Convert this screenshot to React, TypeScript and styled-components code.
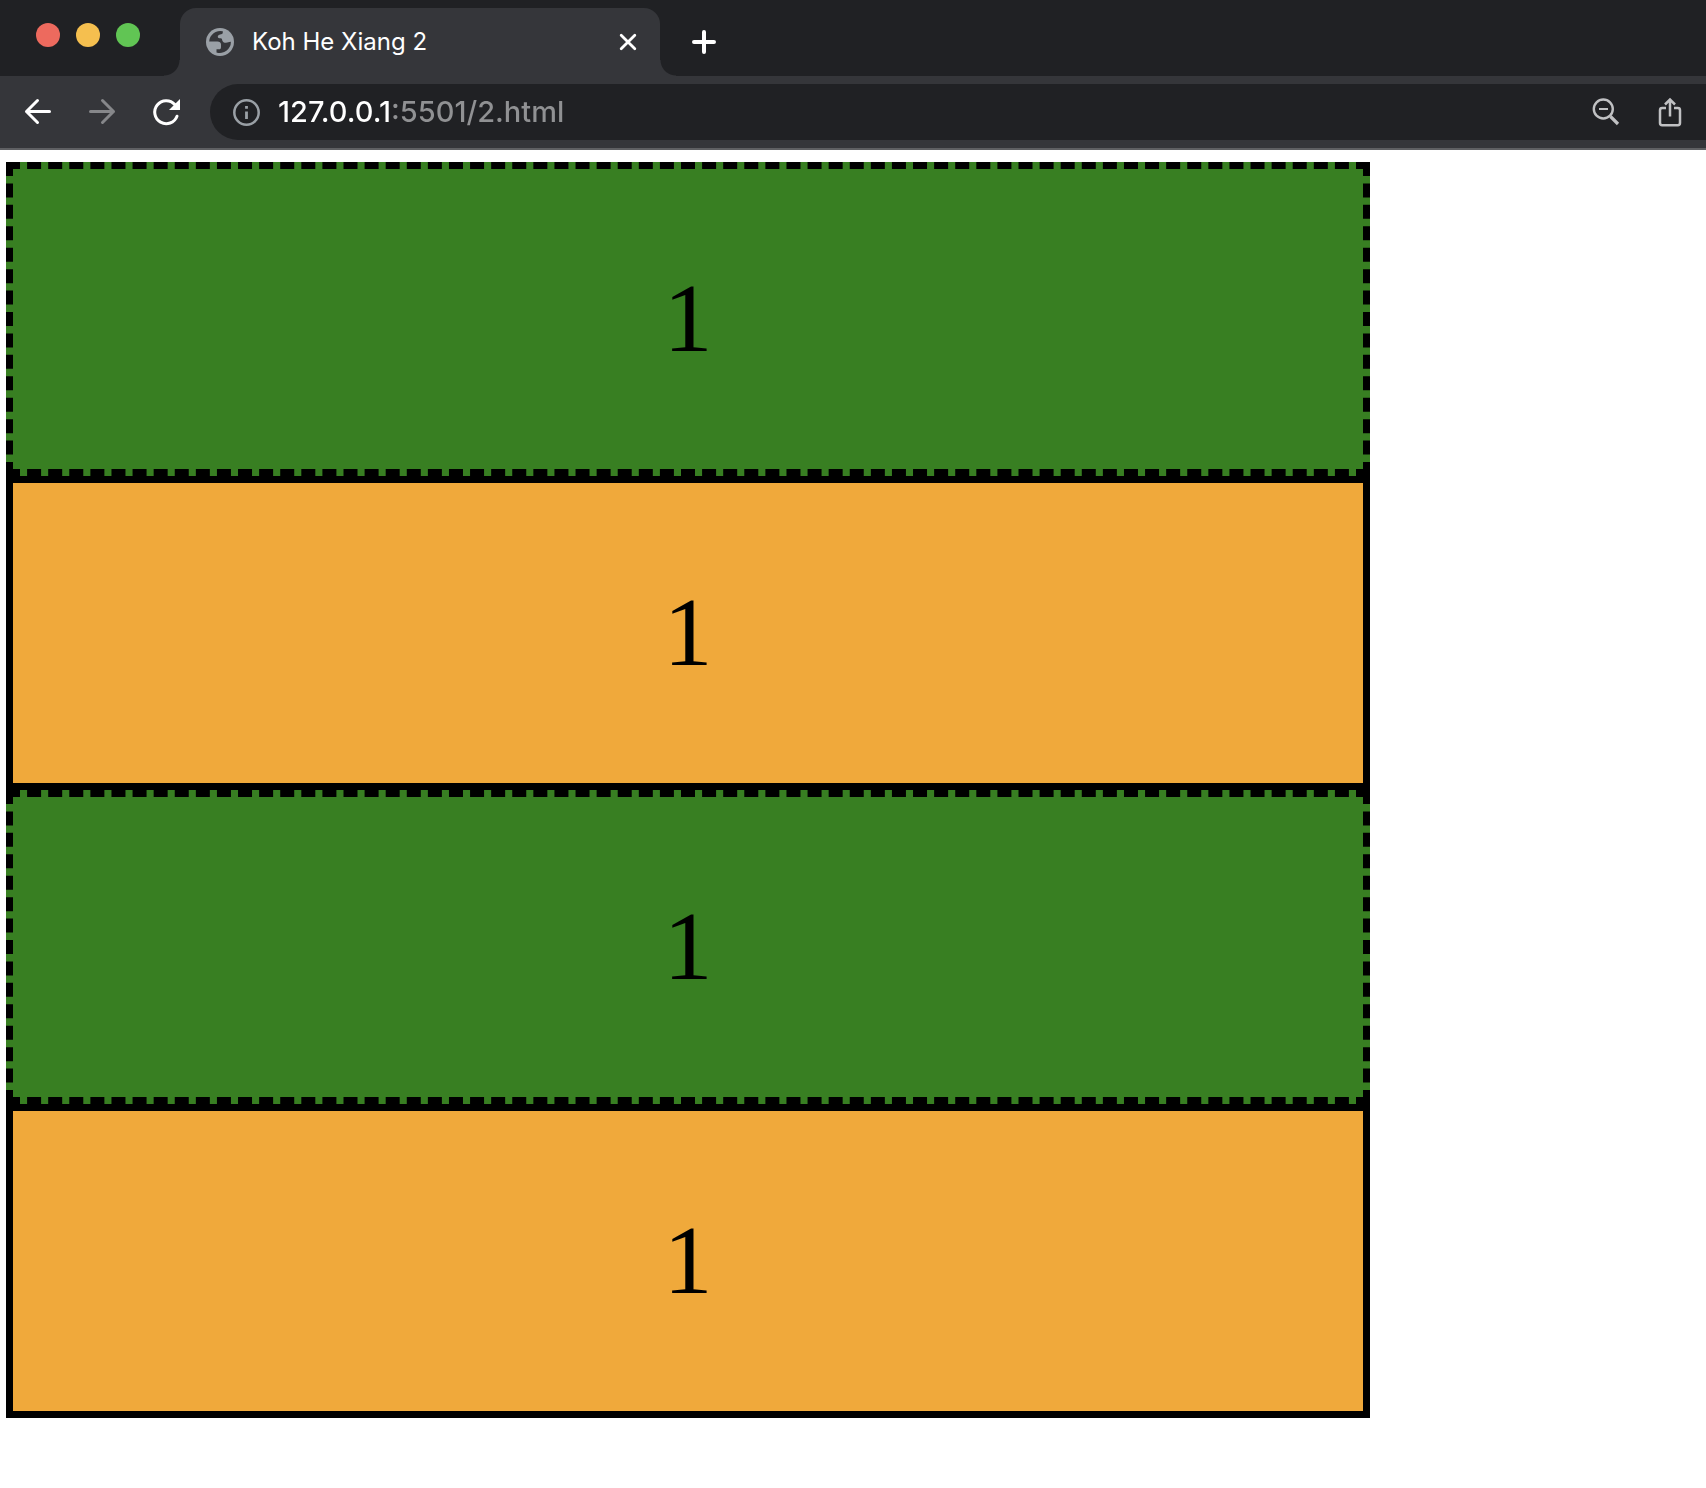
import React from "react";
import styled, { createGlobalStyle } from "styled-components";

const GlobalStyle = createGlobalStyle`
  *, *::before, *::after { box-sizing: border-box; }
  body { margin: 0; background: #fff; overflow-x: hidden; }
`;

const Browser = styled.div`
  display: flex;
  flex-direction: column;
  font-family: Inter, "Liberation Sans", sans-serif;
`;

const TabStrip = styled.header`
  display: flex;
  align-items: stretch;
  height: 76px;
  padding-top: 8px;
  background: #202124;
`;

const WindowControls = styled.div`
  display: flex;
  gap: 16px;
  width: 180px;
  padding: 15px 0 0 36px;
`;

const WindowButton = styled.button<{ $color: string }>`
  width: 24px;
  height: 24px;
  padding: 0;
  border: 0;
  border-radius: 50%;
  background: ${(p) => p.$color};
`;

const Tab = styled.div`
  position: relative;
  display: flex;
  align-items: center;
  gap: 18px;
  width: 480px;
  padding: 0 20px 0 26px;
  border-radius: 16px 16px 0 0;
  background: #35363a;
  color: #fff;

  &::before,
  &::after {
    content: "";
    position: absolute;
    bottom: 0;
    width: 16px;
    height: 16px;
  }
  &::before {
    right: 100%;
    background: radial-gradient(circle at 0 0, transparent 15px, #35363a 16px);
  }
  &::after {
    left: 100%;
    background: radial-gradient(circle at 100% 0, transparent 15px, #35363a 16px);
  }
`;

const TabTitle = styled.span`
  flex: 1;
  font-size: 24px;
  line-height: 32px;
  white-space: nowrap;
`;

const IconButton = styled.button<{ $color?: string }>`
  display: flex;
  align-items: center;
  justify-content: center;
  flex: none;
  width: 24px;
  height: 32px;
  padding: 0;
  border: 0;
  background: none;
  color: ${(p) => p.$color ?? "#fff"};
`;

const NewTab = styled(IconButton)`
  margin: 18px 0 0 32px;
`;

const Toolbar = styled.nav`
  display: flex;
  align-items: center;
  height: 74px;
  padding: 0 0 0 22px;
  border-bottom: 2px solid #5f6063;
  background: #35363a;
`;

const NavButtons = styled.div`
  display: flex;
  gap: 32px;
  width: 188px;
`;

const NavButton = styled(IconButton)`
  width: 32px;
`;

const AddressBar = styled.form`
  display: flex;
  align-items: center;
  flex: 1;
  height: 56px;
  padding: 0 20px;
  border-radius: 28px 0 0 28px;
  background: #202124;
`;

const AddressInput = styled.input`
  flex: 1;
  min-width: 0;
  height: 40px;
  margin-left: 16px;
  padding: 0;
  border: 0;
  outline: 0;
  background: linear-gradient(90deg, #fff 114px, #909193 114px);
  -webkit-background-clip: text;
  background-clip: text;
  -webkit-text-fill-color: transparent;
  font: 500 29px/40px Inter, "Liberation Sans", sans-serif;
`;

const AddressActions = styled.div`
  display: flex;
  gap: 32px;
`;

const Page = styled.main`
  padding: 12px 0 0 6px;
`;

const Box = styled.div<{ $variant: "green" | "orange" }>`
  display: flex;
  align-items: center;
  justify-content: center;
  width: calc(80vw - 1px);
  height: 314px;
  padding-bottom: 2px;
  border: 7px ${(p) => (p.$variant === "green" ? "dashed" : "solid")} #000;
  background: ${(p) => (p.$variant === "green" ? "#387f22" : "#f0a93b")};
  color: #000;
  font-family: "Liberation Serif", serif;
  font-size: 98px;
`;

const boxes: Array<"green" | "orange"> = ["green", "orange", "green", "orange"];

export default function App() {
  return (
    <Browser>
      <GlobalStyle />
      <TabStrip>
        <WindowControls>
          <WindowButton $color="#ed6a5e" aria-label="Close window" />
          <WindowButton $color="#f5bf4f" aria-label="Minimize window" />
          <WindowButton $color="#61c554" aria-label="Zoom window" />
        </WindowControls>
        <Tab>
          <svg width="28" height="28" viewBox="0 0 28 28" aria-hidden="true">
            <circle cx="14" cy="14" r="14" fill="#9aa0a6" />
            <path
              fill="#35363a"
              d="M3.200 13.500A11 11 0 0 1 16.800 3.300V4.500C16.800 6 15.500 6.200 14 6.500C12.300 6.900 11.800 7.800 11.800 8.800C11.800 10.200 13 10.200 14.500 10.200C16 10.200 16 11 16.200 12.200C16.500 13.800 18 14.800 20 14.800C22 14.800 22.500 13.800 24.900 13.800A11 11 0 0 1 10.500 24.400V21.300H13C14.500 21.300 15 20.500 15 19V16.500C15 14.500 13.500 13.700 11.500 13.500Z"
            />
          </svg>
          <TabTitle>Koh He Xiang 2</TabTitle>
          <IconButton aria-label="Close tab">
            <svg width="20" height="20" viewBox="0 0 20 20" fill="none" stroke="currentColor" strokeWidth="2.8" strokeLinecap="round">
              <path d="M3.200 3.200 16.800 16.800M16.800 3.200 3.200 16.800" />
            </svg>
          </IconButton>
        </Tab>
        <NewTab aria-label="New tab">
          <svg width="24" height="24" viewBox="0 0 24 24" fill="none" stroke="currentColor" strokeWidth="4" strokeLinecap="round">
            <path d="M12 2V22M2 12H22" />
          </svg>
        </NewTab>
      </TabStrip>
      <Toolbar>
        <NavButtons>
          <NavButton aria-label="Back">
            <svg width="32" height="32" viewBox="0 0 32 32" fill="none" stroke="currentColor" strokeWidth="3" strokeLinecap="round" strokeLinejoin="round">
              <path d="M27.500 15.500H4.500M15.500 4.500 4.500 15.500 15.500 26.500" />
            </svg>
          </NavButton>
          <NavButton aria-label="Forward" $color="#86878a">
            <svg width="32" height="32" viewBox="0 0 32 32" fill="none" stroke="currentColor" strokeWidth="3" strokeLinecap="round" strokeLinejoin="round">
              <path d="M4.500 15.500H27.500M16.500 4.500 27.500 15.500 16.500 26.500" />
            </svg>
          </NavButton>
          <NavButton aria-label="Reload">
            <svg width="32" height="32" viewBox="0 0 32 32" fill="none">
              <path d="M27 20.200A11.500 11.500 0 1 1 24.800 8.500" stroke="currentColor" strokeWidth="3" strokeLinecap="round" />
              <path d="M30 3V14H19Z" fill="currentColor" />
            </svg>
          </NavButton>
        </NavButtons>
        <AddressBar onSubmit={(e) => e.preventDefault()}>
          <NavButton type="button" aria-label="Site information" $color="#9aa0a6">
            <svg width="28" height="28" viewBox="0 0 28 28" fill="none" stroke="currentColor">
              <circle cx="14.500" cy="14.500" r="12.200" strokeWidth="2.500" />
              <path d="M14.500 13.500V21M14.500 8V10.800" strokeWidth="2.800" />
            </svg>
          </NavButton>
          <AddressInput aria-label="Address" defaultValue="127.0.0.1:5501/2.html" spellCheck={false} />
          <AddressActions>
            <NavButton type="button" aria-label="Zoom out" $color="#c0c1c3">
              <svg width="32" height="32" viewBox="0 0 32 32" fill="none" stroke="currentColor">
                <circle cx="13.300" cy="13" r="9.500" strokeWidth="2.400" />
                <path d="M9 13H18" strokeWidth="2" />
                <path d="M20.500 20.500 28 28" strokeWidth="3.200" />
              </svg>
            </NavButton>
            <NavButton type="button" aria-label="Share" $color="#c0c1c3">
              <svg width="32" height="32" viewBox="0 0 32 32" fill="none" stroke="currentColor" strokeWidth="2.500">
                <path d="M12 12H8.200Q6 12 6 14.200V27Q6 29.200 8.200 29.200H23.800Q26 29.200 26 27V14.200Q26 12 23.800 12H20" />
                <path d="M16 20.500V3.500M11 8.500 16 3.500 21 8.500" />
              </svg>
            </NavButton>
          </AddressActions>
        </AddressBar>
      </Toolbar>
      <Page>
        {boxes.map((variant, i) => (
          <Box key={i} $variant={variant}>
            1
          </Box>
        ))}
      </Page>
    </Browser>
  );
}
